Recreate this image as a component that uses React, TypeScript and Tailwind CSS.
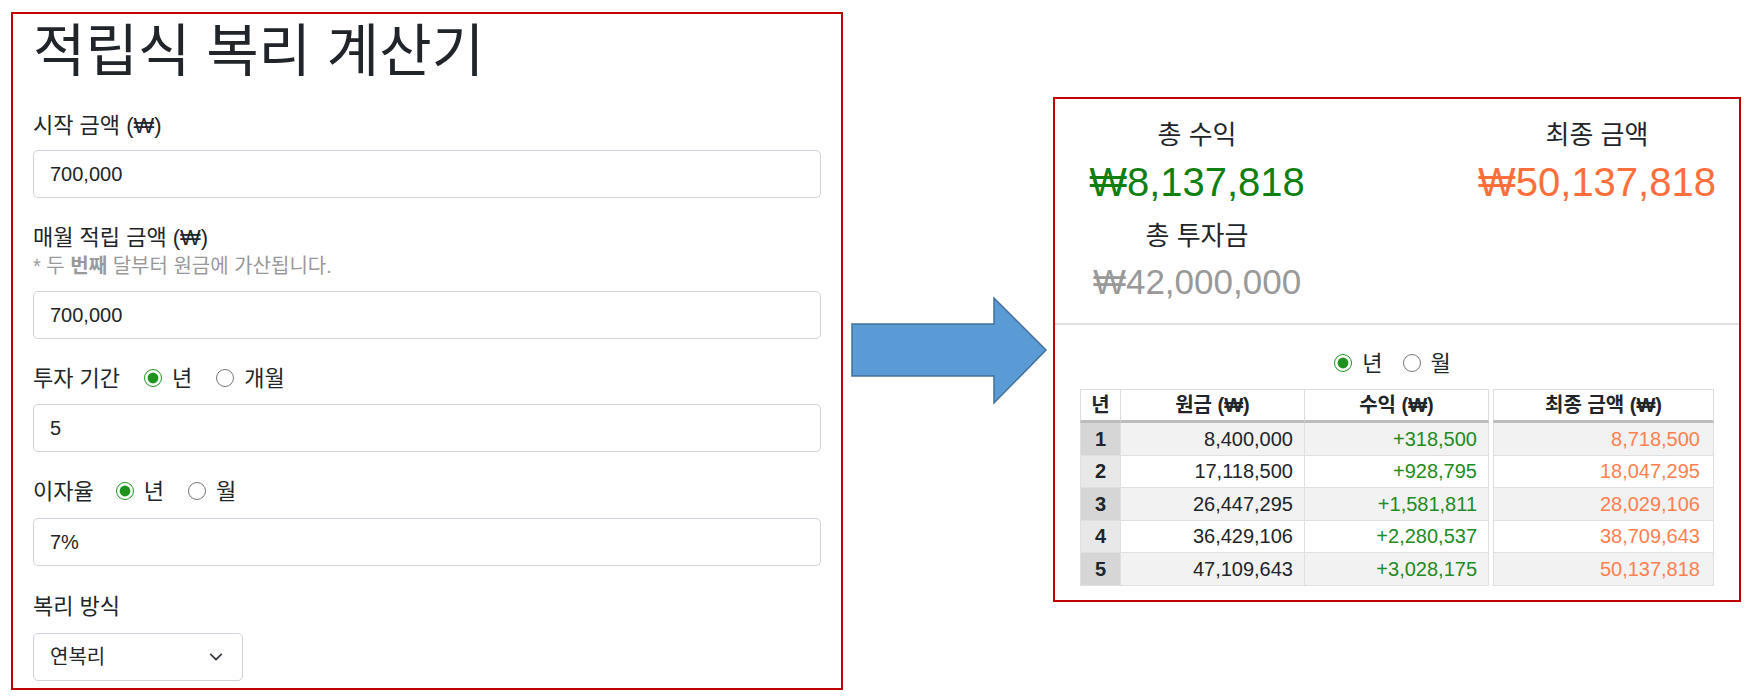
import React from "react";

const rows = [
  { n: 1, principal: "8,400,000", profit: "+318,500", total: "8,718,500" },
  { n: 2, principal: "17,118,500", profit: "+928,795", total: "18,047,295" },
  { n: 3, principal: "26,447,295", profit: "+1,581,811", total: "28,029,106" },
  { n: 4, principal: "36,429,106", profit: "+2,280,537", total: "38,709,643" },
  { n: 5, principal: "47,109,643", profit: "+3,028,175", total: "50,137,818" },
];

function Radio({ checked, label, name }: { checked?: boolean; label: string; name: string }) {
  return (
    <label className="flex items-center gap-[10px]">
      <input
        type="radio"
        name={name}
        defaultChecked={checked}
        className="m-0 h-[18px] w-[18px] accent-[#1e941e]"
      />
      <span>{label}</span>
    </label>
  );
}

function Label({ children, className = "" }: { children: React.ReactNode; className?: string }) {
  return <div className={"flex h-[30px] items-center text-[22px] text-[#212529] " + className}>{children}</div>;
}

function Field({ value, className = "" }: { value: string; className?: string }) {
  return (
    <div
      className={
        "flex h-[48px] items-center rounded-[5px] border border-[#ced4da] bg-white px-[16px] text-[20px] text-[#212529] " +
        className
      }
    >
      {value}
    </div>
  );
}

export default function App() {
  const cell = "border-r border-b border-[#e0e0e0] pr-[11px] text-right";
  const head = "border-t border-r border-b-[3px] border-[#dcdcdc] border-b-[#bdbdbd] bg-white font-bold";

  return (
    <div className="flex h-[699px] w-[1747px] items-start overflow-hidden bg-white font-['Liberation_Sans','Noto_Sans_CJK_KR',sans-serif] text-[#212529]">
      {/* 입력 폼 */}
      <div className="ml-[11px] mt-[12px] h-[678px] w-[832px] shrink-0 border-2 border-[#c00000] px-[20px] pt-[4px]">
        <h1 className="text-[57px] font-normal leading-[67px]">적립식 복리 계산기</h1>

        <Label className="mt-[25px]">시작 금액 (₩)</Label>
        <Field className="mt-[10px]" value="700,000" />

        <Label className="mt-[24px]">매월 적립 금액 (₩)</Label>
        <div className="mt-[1px] h-[26px] text-[20px] leading-[26px] text-[#999]">
          * 두 <b className="font-bold">번째</b> 달부터 원금에 가산됩니다.
        </div>
        <Field className="mt-[12px]" value="700,000" />

        <Label className="mt-[24px]">
          <span>투자 기간</span>
          <div className="ml-[24px] flex items-center gap-[24px]">
            <Radio name="period" checked label="년" />
            <Radio name="period" label="개월" />
          </div>
        </Label>
        <Field className="mt-[11px]" value="5" />

        <Label className="mt-[24px]">
          <span>이자율</span>
          <div className="ml-[22px] flex items-center gap-[24px]">
            <Radio name="rate" checked label="년" />
            <Radio name="rate" label="월" />
          </div>
        </Label>
        <Field className="mt-[12px]" value="7%" />

        <Label className="mt-[25px]">복리 방식</Label>
        <div className="mt-[12px] flex h-[48px] w-[210px] items-center justify-between rounded-[5px] border border-[#ced4da] pl-[16px] pr-[19px] text-[20px]">
          <span>연복리</span>
          <svg width="14" height="14" viewBox="0 0 16 16" fill="none">
            <path d="M2 5l6 6 6-6" stroke="#343a40" strokeWidth="2" strokeLinecap="round" strokeLinejoin="round" />
          </svg>
        </div>
      </div>

      {/* 화살표 */}
      <svg width="197" height="109" viewBox="0 0 197 109" className="ml-[8px] mt-[296px] shrink-0">
        <path d="M1 28 H143 V2 L195 54 L143 107 V80 H1 Z" fill="#5b9bd5" stroke="#41719c" strokeWidth="1.5" />
      </svg>

      {/* 결과 */}
      <div className="ml-[5px] mt-[97px] h-[505px] w-[688px] shrink-0 border-2 border-[#c00000]">
        <div className="flex justify-between pt-[19px]">
          <div className="w-[284px] text-center">
            <div className="text-[26px] leading-[34px]">총 수익</div>
            <div className="mt-[5px] text-[40px] leading-[50px] text-[#0f800f]">₩8,137,818</div>
            <div className="mt-[12px] text-[26px] leading-[34px]">총 투자금</div>
            <div className="mt-[7px] text-[35px] leading-[44px] text-[#999]">₩42,000,000</div>
          </div>
          <div className="w-[284px] text-center">
            <div className="text-[26px] leading-[34px]">최종 금액</div>
            <div className="mt-[5px] text-[40px] leading-[50px] text-[#ff6f3c]">₩50,137,818</div>
          </div>
        </div>

        <div className="mt-[19px] h-[2px] bg-[#e0e0e0]" />

        <div className="mt-[23px] flex h-[30px] items-center justify-center gap-[20px] pr-[9px] text-[22px]">
          <Radio name="view" checked label="년" />
          <Radio name="view" label="월" />
        </div>

        <table className="mx-auto mt-[11px] w-[634px] table-fixed border-separate border-spacing-0 text-[20px]">
          <thead>
            <tr className="h-[34px]">
              <th className={head + " w-[41px] border-l bg-[#e6e6e6]"}>년</th>
              <th className={head + " w-[184px]"}>원금 (₩)</th>
              <th className={head + " w-[184px]"}>수익 (₩)</th>
              <th className="w-[4px] p-0" />
              <th className={head + " w-[221px] border-l"}>최종 금액 (₩)</th>
            </tr>
          </thead>
          <tbody>
            {rows.map((r) => {
              const odd = r.n % 2 === 1;
              const bg = odd ? "bg-[#f2f2f2]" : "bg-white";
              return (
                <tr key={r.n} className="h-[32.5px]">
                  <td
                    className={
                      "border-l border-r border-b border-[#e0e0e0] text-center font-bold " +
                      (odd ? "bg-[#d6d6d6]" : "bg-[#e8e8e8]")
                    }
                  >
                    {r.n}
                  </td>
                  <td className={cell + " " + bg}>{r.principal}</td>
                  <td className={cell + " text-[#228b22] " + bg}>{r.profit}</td>
                  <td className="p-0" />
                  <td className={cell + " border-l pr-[13px] text-[#ff7f50] " + bg}>{r.total}</td>
                </tr>
              );
            })}
          </tbody>
        </table>
      </div>
    </div>
  );
}
